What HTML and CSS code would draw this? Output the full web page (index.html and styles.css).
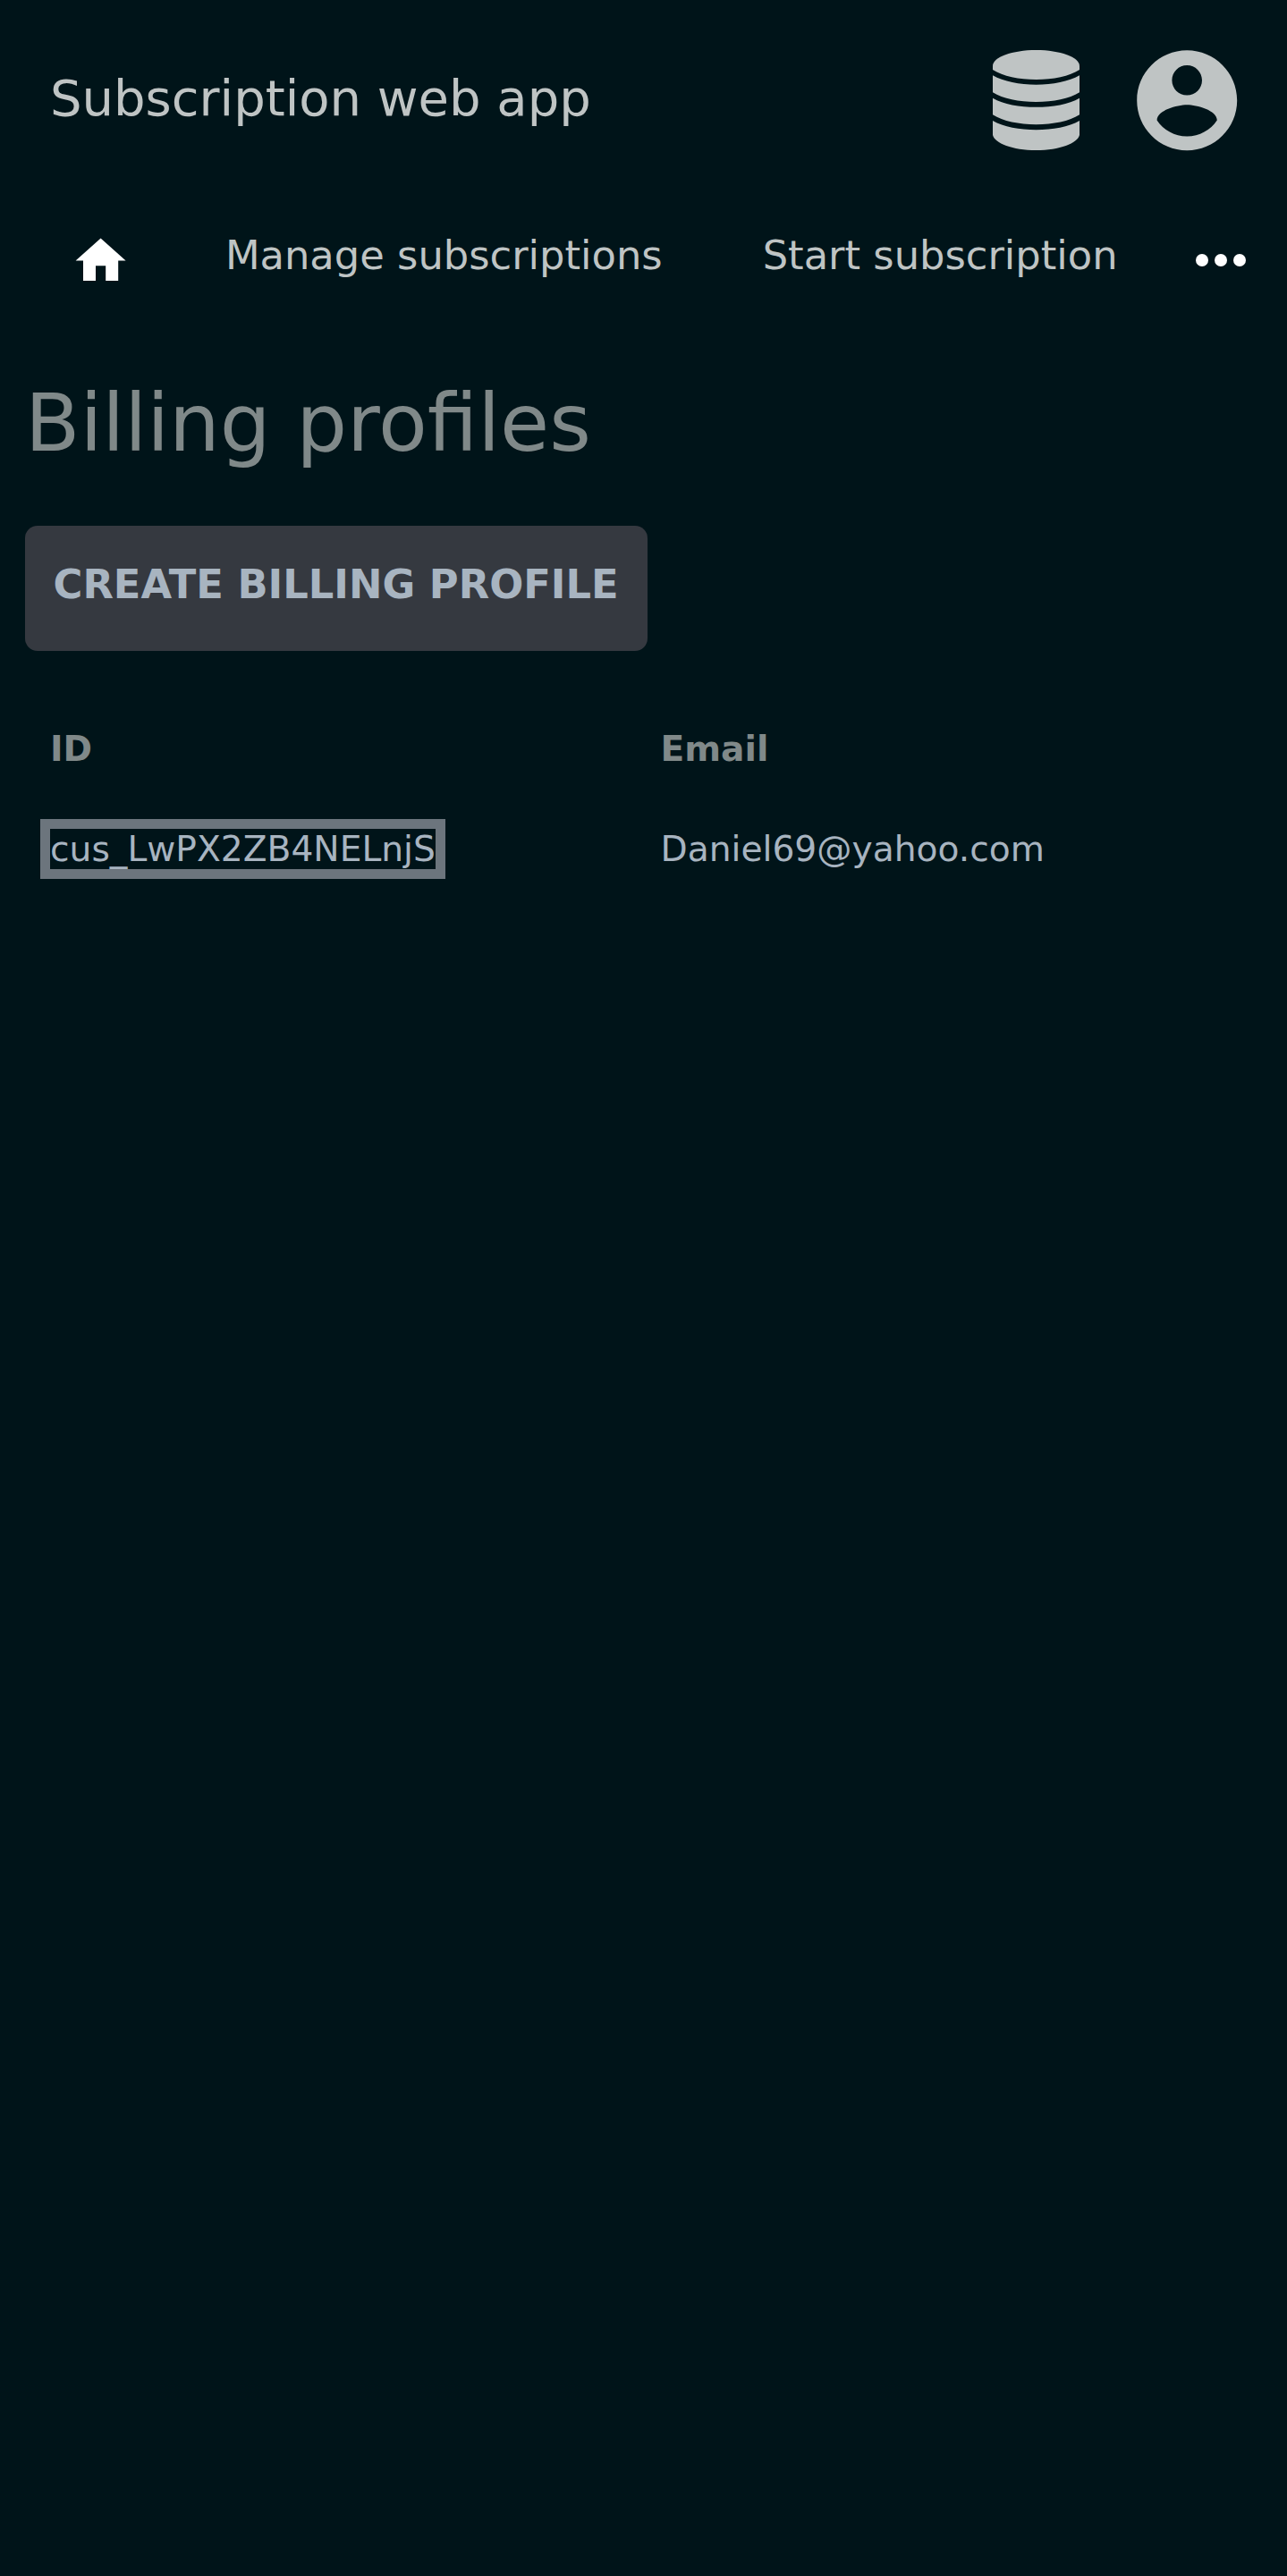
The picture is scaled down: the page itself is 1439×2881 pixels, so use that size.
FILE: index.html
```html
<!DOCTYPE html>
<html lang="en">
<head>
<meta charset="utf-8">
<title>Billing profiles</title>
<link rel="stylesheet" href="styles.css">
</head>
<body>
<header class="header">
  <div class="brand">Subscription web app</div>
  <div class="actions">
    <svg class="database" viewBox="0 0 291 336" aria-hidden="true">
      <path d="M0 53C0 24 65 0 145.500 0S291 24 291 53V66C257 88 203 99 145.500 99S34 88 0 66Z"/>
      <path d="M0 85C36 106 90 116 145.500 116S255 106 291 85V142C257 164 203 174 145.500 174S34 164 0 142Z"/>
      <path d="M0 161C36 182 90 191.500 145.500 191.500S255 182 291 161V217C257 239 203 249.500 145.500 249.500S34 239 0 217Z"/>
      <path d="M0 237C36 258 90 267.500 145.500 267.500S255 258 291 237V285C284 313 225 336 145.500 336S7 313 0 285Z"/>
    </svg>
    <svg class="account" viewBox="0 0 24 24" aria-hidden="true"><path d="M12 2C6.480 2 2 6.480 2 12s4.480 10 10 10 10-4.480 10-10S17.520 2 12 2zm0 3c1.660 0 3 1.340 3 3s-1.340 3-3 3-3-1.340-3-3 1.340-3 3-3zm0 14.200c-2.500 0-4.710-1.280-6-3.220.030-1.990 4-3.080 6-3.080 1.990 0 5.970 1.090 6 3.080-1.290 1.940-3.500 3.220-6 3.220z"/></svg>
  </div>
</header>
<nav class="nav">
  <svg class="home" viewBox="0 0 24 24" aria-hidden="true"><path d="M10 20v-6h4v6h5v-8h3L12 3 2 12h3v8z"/></svg>
  <a class="link">Manage subscriptions</a>
  <a class="link">Start subscription</a>
  <svg class="more" viewBox="0 0 24 24" aria-hidden="true"><circle cx="6" cy="12" r="2"/><circle cx="12" cy="12" r="2"/><circle cx="18" cy="12" r="2"/></svg>
</nav>
<main class="main">
  <h1 class="title">Billing profiles</h1>
  <button class="create">CREATE BILLING PROFILE</button>
  <div class="table">
    <div class="th">ID</div>
    <div class="th">Email</div>
    <div class="td"><a class="focused">cus_LwPX2ZB4NELnjS</a></div>
    <div class="td">Daniel69@yahoo.com</div>
  </div>
</main>
</body>
</html>
```
FILE: styles.css
```css
* { box-sizing: border-box; }
body {
  margin: 0;
  min-height: 2881px;
  background: #001419;
  color: #bfc4c4;
  font-family: "DejaVu Sans", sans-serif;
  overflow-x: hidden;
}
svg { display: block; flex: none; fill: currentColor; }
.header {
  display: flex;
  justify-content: space-between;
  align-items: center;
  height: 224px;
  padding: 0 45px 0 56px;
}
.brand { font-size: 56px; line-height: 64px; padding-bottom: 4px; }
.actions { display: flex; align-items: center; gap: 52.600px; }
.database { width: 97px; height: 112px; }
.account { width: 134.4px; height: 134.4px; }
.nav {
  display: flex;
  align-items: flex-start;
  height: 168px;
  padding: 34px 32px 0 78.600px;
}
.home { width: 67.200px; height: 67.200px; margin-right: 50.100px; color: #fff; }
.link { padding: 1px 56px 0; font-size: 44.800px; line-height: 54px; white-space: nowrap; }
.more { width: 84px; height: 84px; margin: -9.500px 0 0 auto; color: #fff; }
.main { padding: 28px 28px 0; }
.title { margin: 0; font-size: 89.600px; font-weight: 400; line-height: 106px; color: #808989; }
.create {
  display: block;
  height: 140px;
  margin: 62px 0 54px;
  padding: 0 32.500px 8px 31.500px;
  border: 0;
  border-radius: 14px;
  background: #353940;
  color: #a8b4c0;
  font: 700 44.800px/52px "DejaVu Sans", sans-serif;
}
.table { display: grid; grid-template-columns: 682.500px 1fr; padding-left: 28px; font-size: 39.200px; line-height: 112px; }
.th { font-weight: 700; color: #808989; }
.td { color: #a8b4c0; }
.focused { outline: 11px solid #6c757d; }
```
